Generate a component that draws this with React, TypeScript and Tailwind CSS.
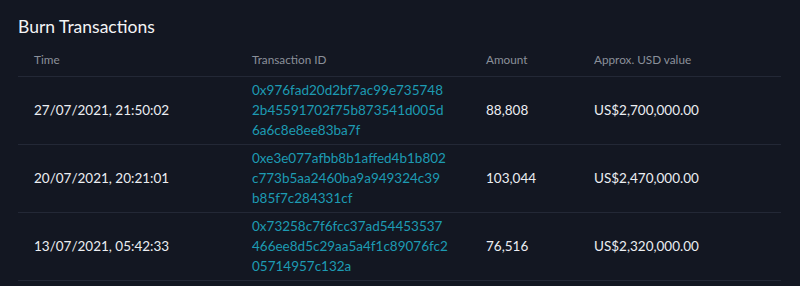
const rows = [
  {
    time: '27/07/2021, 21:50:02',
    tx: ['0x976fad20d2bf7ac99e735748', '2b45591702f75b873541d005d', '6a6c8e8ee83ba7f'],
    amount: '88,808',
    usd: 'US$2,700,000.00',
  },
  {
    time: '20/07/2021, 20:21:01',
    tx: ['0xe3e077afbb8b1affed4b1b802', 'c773b5aa2460ba9a949324c39', 'b85f7c284331cf'],
    amount: '103,044',
    usd: 'US$2,470,000.00',
  },
  {
    time: '13/07/2021, 05:42:33',
    tx: ['0x73258c7f6fcc37ad54453537', '466ee8d5c29aa5a4f1c89076fc2', '05714957c132a'],
    amount: '76,516',
    usd: 'US$2,320,000.00',
  },
]

export default function App() {
  return (
    <div className="w-[800px] h-[286px] bg-[#131722] font-['Lato',sans-serif] overflow-hidden">
      <div className="pl-[18px] pr-[19px] pt-[14px]">
        <h2 className="text-[17.5px] leading-[26px] text-[#f3f4f6]">Burn Transactions</h2>
        <table className="mt-[8px] w-full border-collapse text-left">
          <thead>
            <tr className="h-[28px] border-b border-[#232836] text-[11.75px] text-[#8b909a]">
              <th className="w-[218px] pl-4 pb-[4px] font-normal">Time</th>
              <th className="w-[234px] pl-4 pb-[4px] font-normal">Transaction ID</th>
              <th className="w-[108px] pl-4 pb-[4px] font-normal">Amount</th>
              <th className="pl-4 pb-[4px] font-normal">Approx. USD value</th>
            </tr>
          </thead>
          <tbody>
            {rows.map((r) => (
              <tr key={r.time} className="h-[68px] border-b border-[#232836] text-[13.5px] text-[#eceef2]">
                <td className="pl-4">{r.time}</td>
                <td className="pl-4 leading-[20px] text-[#1d9bb3]">
                  {r.tx.map((part) => (
                    <span key={part} className="block">{part}</span>
                  ))}
                </td>
                <td className="pl-4">{r.amount}</td>
                <td className="pl-4">{r.usd}</td>
              </tr>
            ))}
          </tbody>
        </table>
      </div>
    </div>
  )
}
